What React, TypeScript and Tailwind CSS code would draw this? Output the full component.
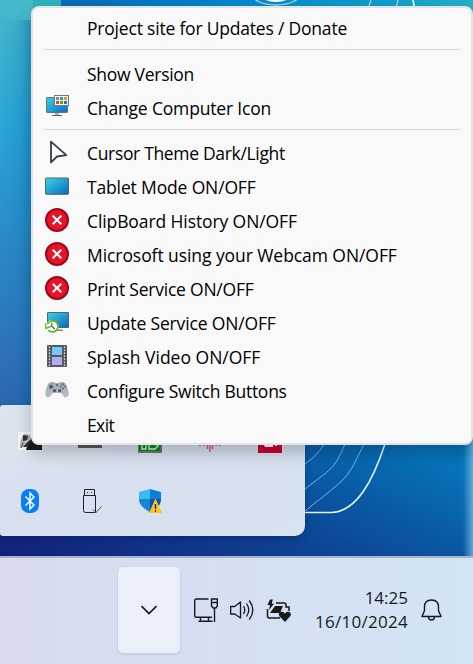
import React from "react";

function ComputerIcon() {
  return (
    <svg width="24" height="24" viewBox="0 0 24 24">
      <defs>
        <linearGradient id="screenA" x1="0" y1="0" x2="1" y2="1">
          <stop offset="0" stopColor="#37d3e2" />
          <stop offset="1" stopColor="#0c69bd" />
        </linearGradient>
      </defs>
      <rect x="1.5" y="2.5" width="21" height="15" rx="0.5" fill="url(#screenA)" stroke="#65747c" />
      <path d="M10 18h4v2h-4z" fill="#aab4bb" />
      <path d="M7 20.5h10" stroke="#555f66" />
      <rect x="9.5" y="0.5" width="14" height="10" fill="#fff" stroke="#767676" />
      <path d="M11 2h3v3h-3z" fill="#a070d0" />
      <path d="M15 2h3v3h-3z" fill="#1aa5b5" />
      <path d="M19 2h3v3h-3z" fill="#f59110" />
      <path d="M11 6h3v3h-3z" fill="#dd4d16" />
      <path d="M15 6h3v3h-3z" fill="#47ac17" />
      <path d="M19 6h3v3h-3z" fill="#117bd4" />
    </svg>
  );
}

function CursorIcon() {
  return (
    <svg width="24" height="24" viewBox="0 0 24 24">
      <path d="M6 1.6V22.4L12 16.5L21.3 15.2Z" fill="#fdfdfd" stroke="#344047" strokeWidth="1.8" strokeLinejoin="round" />
    </svg>
  );
}

function TabletIcon() {
  return (
    <svg width="24" height="24" viewBox="0 0 24 24">
      <defs>
        <linearGradient id="screenB" x1="0" y1="0" x2="1" y2="1">
          <stop offset="0" stopColor="#37d8e4" />
          <stop offset="1" stopColor="#0b68bd" />
        </linearGradient>
      </defs>
      <rect x="0.5" y="4" width="23" height="16.3" rx="0.8" fill="url(#screenB)" stroke="#53656f" />
    </svg>
  );
}

function OffIcon() {
  return (
    <svg width="24" height="24" viewBox="0 0 24 24">
      <circle cx="12" cy="12" r="11" fill="#ea1226" stroke="#9d0720" strokeWidth="2" />
      <path d="M7.7 7.7l8.6 8.6M16.3 7.7l-8.6 8.6" stroke="#fff" strokeWidth="2.1" />
    </svg>
  );
}

function UpdateIcon() {
  return (
    <svg width="24" height="24" viewBox="0 0 24 24">
      <rect x="2.5" y="2.5" width="21" height="15" rx="0.5" fill="url(#screenB)" stroke="#53656f" />
      <path d="M12 20.2h6" stroke="#4c565c" />
      <circle cx="7" cy="16.3" r="6" fill="#fff" stroke="#fff" />
      <path d="M2.2 14.3A5.6 5.6 0 1 1 3.3 20.2" fill="none" stroke="#68b92c" strokeWidth="1.8" />
      <path d="M0 13.2L1 18.4L6 16.3" fill="none" stroke="#68b92c" strokeWidth="1.5" />
      <path d="M6.8 12.8V16.3L9.8 19" fill="none" stroke="#455057" strokeWidth="1.1" />
    </svg>
  );
}

function FilmIcon() {
  return (
    <svg width="24" height="24" viewBox="0 0 24 24">
      <defs>
        <linearGradient id="film" gradientUnits="userSpaceOnUse" x1="7" y1="3" x2="17" y2="21">
          <stop offset="0" stopColor="#53d5ff" />
          <stop offset="1" stopColor="#cf9ff4" />
        </linearGradient>
      </defs>
      <rect x="2" y="1" width="20" height="22" rx="1" fill="#56595c" />
      <path d="M7 3h10v8H7zM7 13h10v8H7z" fill="url(#film)" />
      <path d="M4.5 2.5v19.5M19.5 2.5v19.5" stroke="#e2e2e2" strokeWidth="1.2" strokeDasharray="1.5 1.5" />
    </svg>
  );
}

function GamepadIcon() {
  return (
    <svg width="24" height="24" viewBox="0 0 24 24">
      <defs>
        <linearGradient id="pad" x1="0" y1="0" x2="0" y2="1">
          <stop offset="0" stopColor="#9fa7b1" />
          <stop offset="1" stopColor="#b7bfc9" />
        </linearGradient>
      </defs>
      <path
        d="M7 4C9 4 9 5 12 5S15 4 17 4C21 4 22 8 23.5 14C24.5 18 22 20 20.5 19.5C18 19 17.5 15 15.5 15H8.5C6.5 15 6 19 3.5 19.5C2 20 -.5 18 .5 14C2 8 3 4 7 4Z"
        fill="url(#pad)"
      />
      <circle cx="6" cy="8.7" r="2" fill="#4c5663" />
      <circle cx="9.5" cy="12.7" r="1.6" fill="#4c5663" />
      <circle cx="14.7" cy="12.7" r="1.6" fill="#4c5663" />
      <circle cx="12" cy="7" r="1" fill="#4c5663" />
      <circle cx="18" cy="6.3" r="1" fill="#5c6673" />
      <circle cx="18" cy="10.6" r="1" fill="#5c6673" />
      <circle cx="15.9" cy="8.5" r="1" fill="#5c6673" />
      <circle cx="20.1" cy="8.5" r="1" fill="#5c6673" />
    </svg>
  );
}

type Item = { label: string; tracking: string; icon?: React.ReactNode };

const links: Item[] = [{ label: "Project site for Updates / Donate", tracking: "tracking-[-0.2px]" }];
const about: Item[] = [
  { label: "Show Version", tracking: "tracking-[-0.28px]" },
  { label: "Change Computer Icon", tracking: "tracking-[-0.17px]", icon: <ComputerIcon /> },
];
const switches: Item[] = [
  { label: "Cursor Theme Dark/Light", tracking: "tracking-[-0.33px]", icon: <CursorIcon /> },
  { label: "Tablet Mode ON/OFF", tracking: "tracking-[-0.15px]", icon: <TabletIcon /> },
  { label: "ClipBoard History ON/OFF", tracking: "tracking-[-0.1px]", icon: <OffIcon /> },
  { label: "Microsoft using your Webcam ON/OFF", tracking: "tracking-[-0.07px]", icon: <OffIcon /> },
  { label: "Print Service ON/OFF", tracking: "tracking-[-0.22px]", icon: <OffIcon /> },
  { label: "Update Service ON/OFF", tracking: "tracking-[-0.15px]", icon: <UpdateIcon /> },
  { label: "Splash Video ON/OFF", tracking: "tracking-normal", icon: <FilmIcon /> },
  { label: "Configure Switch Buttons", tracking: "tracking-[-0.26px]", icon: <GamepadIcon /> },
  { label: "Exit", tracking: "tracking-[-0.6px]" },
];

function Rows({ items }: { items: Item[] }) {
  return (
    <>
      {items.map((item) => (
        <li key={item.label} className="flex h-[34px] items-center pl-3">
          <span className="mb-0.5 w-[42px] shrink-0">{item.icon}</span>
          <span className={"whitespace-nowrap " + item.tracking}>{item.label}</span>
        </li>
      ))}
    </>
  );
}

function ContextMenu() {
  return (
    <ul className="absolute top-1.5 left-[31px] h-[439px] w-[442px] rounded-lg border-2 border-[#e3e4e6] bg-[#f9f9f9] pt-[3px] text-[17.5px] leading-6 text-black shadow-[0_8px_16px_rgba(0,0,0,0.22)]">
      <Rows items={links} />
      <li className="mx-[11px] mt-1 mb-[7px] h-px bg-[#d7d7d7]" />
      <Rows items={about} />
      <li className="mx-[11px] mt-1 mb-[6px] h-px bg-[#d7d7d7]" />
      <Rows items={switches} />
    </ul>
  );
}

function Wallpaper() {
  return (
    <svg className="absolute inset-0" width="473" height="556" viewBox="0 0 473 556">
      <defs>
        <linearGradient id="side" gradientUnits="userSpaceOnUse" x1="0" y1="0" x2="0" y2="420">
          <stop offset="0" stopColor="#48b9ca" />
          <stop offset="0.3" stopColor="#2ba5d7" />
          <stop offset="0.6" stopColor="#2c88c4" />
          <stop offset="0.85" stopColor="#3170b6" />
          <stop offset="1" stopColor="#2a62ab" />
        </linearGradient>
        <linearGradient id="sideShade" gradientUnits="userSpaceOnUse" x1="0" y1="0" x2="33" y2="0">
          <stop offset="0" stopColor="#0070b5" stopOpacity="0" />
          <stop offset="0.6" stopColor="#0070b5" stopOpacity="0.15" />
          <stop offset="1" stopColor="#0070b5" stopOpacity="0.4" />
        </linearGradient>
        <linearGradient id="topStrip" x1="0" y1="0" x2="1" y2="0">
          <stop offset="0" stopColor="#086ab3" />
          <stop offset="0.4" stopColor="#0386c9" />
          <stop offset="0.8" stopColor="#109fc9" />
          <stop offset="1" stopColor="#28b0c8" />
        </linearGradient>
        <linearGradient id="lower" x1="0" y1="1" x2="1" y2="0.4">
          <stop offset="0" stopColor="#13207c" />
          <stop offset="0.5" stopColor="#0d4393" />
          <stop offset="0.75" stopColor="#0a59a6" />
          <stop offset="1" stopColor="#0674b8" />
        </linearGradient>
        <linearGradient id="edge" x1="0" y1="0" x2="1" y2="0">
          <stop offset="0" stopColor="#73bbe2" stopOpacity="0" />
          <stop offset="1" stopColor="#73bbe2" stopOpacity="0.8" />
        </linearGradient>
      </defs>
      <path d="M0 0h61v556H0z" fill="url(#side)" />
      <path d="M33 0h28v20H33z" fill="#2eb2b9" />
      <path d="M0 20h33v400H0z" fill="url(#sideShade)" />
      <path d="M61 0h412v60H61z" fill="url(#topStrip)" />
      <path d="M0 420h473v136H0z" fill="url(#lower)" />
      <path d="M463 430h10v126h-10z" fill="url(#edge)" />
      <ellipse cx="276" cy="-6" rx="24" ry="11" fill="none" stroke="#a4dcf2" strokeWidth="1.3" />
      <ellipse cx="276" cy="-7" rx="17" ry="9" fill="#f5ffff" />
      <path d="M371 0l-4 12M398 0l-3 12" stroke="#9edbe7" strokeWidth="1.2" />
      <path d="M413 0l2 12" stroke="#e8ffff" strokeWidth="1.7" />
      <g fill="none" stroke="#75b8ec" strokeWidth="1">
        <path d="M324 444Q319 454 305 464" />
        <path d="M345 444C334 470 332 468 305 489" />
        <path d="M364 444C346 481 350 475 305 511" />
      </g>
      <path d="M385 444C373 480 357 512 331 512.5H305" fill="none" stroke="#d7fbf8" strokeWidth="1.6" />
    </svg>
  );
}

function TrayPanel() {
  return (
    <div className="absolute top-[405px] left-0 grid h-[131px] w-[305px] grid-cols-[repeat(5,60px)] grid-rows-[60px_60px] place-items-center rounded-l-[3px] rounded-r-[10px] bg-linear-to-br from-[#dce4ee] via-[#d7e0ee] to-[#d7e3ef] pt-1.5 shadow-[0_3px_7px_rgba(0,0,30,0.25)]">
      <svg width="24" height="24" viewBox="0 0 24 24">
        <path d="M0 3h24v18H0z" fill="#f3f3f3" />
        <path d="M12 9h12v12H8z" fill="#191b1e" />
        <path d="M2 19C2 14 3 7 7 5L12 6L13 11L8 12L5 18Z" fill="#a8adb3" />
        <path d="M5 6l5 1-1 4-4 1zM9 13l4-2-4 7H5z" fill="#2d3238" />
        <path d="M3 19l2-5" stroke="#555c64" />
      </svg>
      <svg width="24" height="24" viewBox="0 0 24 24">
        <path d="M0 6h24v13H0z" fill="#55585c" />
      </svg>
      <svg width="24" height="24" viewBox="0 0 24 24">
        <path d="M0 0h24v24H0z" fill="#707b76" />
        <path d="M1 1h21.5v21H1z" fill="#078c18" />
        <path d="M4 20v-6h4v6zM11 20v-6h5l4 3-3 3z" fill="none" stroke="#e6f0e5" strokeWidth="1.3" />
      </svg>
      <svg width="24" height="24" viewBox="0 0 24 24" stroke="#d85a87" strokeWidth="1.5">
        <path d="M2 10v7M6 8v9M9.5 6v14M12 4v19M14.5 6v14M18 8v9M22 10v7" />
      </svg>
      <svg width="24" height="24" viewBox="0 0 24 24">
        <path d="M0 0h24v24H0z" fill="#ca0433" />
        <path d="M6 14h5v2h3v-2h1v4H9q-3 0-3-2zM17 13h2v4h-2z" fill="#fff" />
      </svg>
      <svg width="24" height="24" viewBox="0 0 24 24">
        <rect x="3" width="18" height="24" rx="8" fill="#087df8" />
        <path d="M7.5 7.5L16 16L12 20V4l4 4-8.5 8.5" fill="none" stroke="#fff" strokeWidth="1.5" />
      </svg>
      <svg width="24" height="24" viewBox="0 0 24 24" fill="none" stroke="#202124">
        <path d="M6.5 6.5v-6h10v6M5.5 6.5h12v17h-10a2 2 0 0 1-2-2z" />
        <path d="M9 3.5h1M13 3.5h1" />
        <path d="M15 20.5l3 3 5.5-6" stroke="#555" />
      </svg>
      <svg width="24" height="24" viewBox="0 0 24 24">
        <path d="M12 0L23 3v7H12z" fill="#0b80d7" />
        <path d="M12 0L1 3v7h11z" fill="#35bdf0" />
        <path d="M1 10h11v13C6 20 1 16 1 10z" fill="#1685dc" />
        <path d="M12 10h11c0 6-4 10-11 13z" fill="#0754aa" />
        <path d="M17.5 9.5L24 24H11z" fill="#ffc51b" />
        <path d="M17.5 15v5M17.5 21.3v1.4" stroke="#151515" strokeWidth="1.3" />
      </svg>
    </div>
  );
}

function Taskbar() {
  return (
    <footer className="flex h-[108px] border-t-2 border-[#a9b3c8] bg-linear-to-r from-[#d8daee] via-[#d4e0f1] to-[#d2e5f4] text-[#17191c]">
      <button className="mt-[9px] ml-[118px] flex h-[86px] w-[62px] items-center justify-center rounded-[5px] bg-[#ebeff9] shadow-[0_1px_1px_1px_rgba(150,170,210,0.24)]">
        <svg width="18" height="12" viewBox="0 0 18 12">
          <path d="M1.5 2.2L9 9.5L16.5 2.2" fill="none" stroke="currentColor" strokeWidth="1.7" />
        </svg>
      </button>
      <div className="mt-10 ml-[14px] flex gap-3">
        <svg width="24" height="24" viewBox="0 0 24 24" fill="none" stroke="currentColor" strokeWidth="1.4">
          <path d="M14.5 1H2.5Q.7 1 .7 2.8V17.5Q.7 19.3 2.5 19.3H18M6.5 19.5v4M14.5 19.5v4M4.5 23.3h14" />
          <path d="M17.5 1h5.8v7l-1.5 2h-2.5l-1.8-2zM17.5 4.5h5.8M20.5 10v14" />
        </svg>
        <svg width="24" height="24" viewBox="0 0 24 24" fill="none" stroke="currentColor" strokeWidth="1.3">
          <path d="M.7 8.5h4L10.5 4v16L4.7 16h-4z" strokeLinejoin="round" />
          <path d="M13.5 8q2.5 4 0 8M16.5 5.5q4.5 6.5 0 13M19.3 2.5q7 9.5 0 19" />
        </svg>
        <svg width="25" height="24" viewBox="0 0 25 24">
          <path d="M10 5h8q2 0 2 2v2h3v4M1.5 11v7q0 2 2 2H14" fill="none" stroke="currentColor" strokeWidth="1.5" />
          <path d="M4 1.5L1.5 7H4L3 12L8 5.7H5.8L6.7 1.5z" fill="currentColor" />
          <path d="M9 8h8l-3 7H4z" fill="currentColor" />
          <path d="M19 24L13.7 18.5C10.5 14 16.5 12 19 15.5C21.5 12 27 14.5 24 18.5z" fill="currentColor" />
        </svg>
      </div>
      <time className="mt-7 ml-auto flex w-24 flex-col items-end text-[17px] leading-6">
        <span>14:25</span>
        <span className="tracking-[0.27px]">16/10/2024</span>
      </time>
      <svg className="mt-10 mr-[31px] ml-[13px]" width="21" height="24" viewBox="0 0 21 24" fill="none" stroke="currentColor" strokeWidth="1.4">
        <path d="M3.5 12.5V9Q3.5 2 10.5 2T17.5 9v3.5L20 18.5H1z" strokeLinejoin="round" />
        <path d="M7.5 19q0 3 3 3t3-3" />
      </svg>
    </footer>
  );
}

export default function App() {
  return (
    <div className="flex h-[664px] w-[473px] flex-col overflow-hidden font-['Open_Sans','Noto_Sans',sans-serif]">
      <main className="relative h-[556px] shrink-0">
        <Wallpaper />
        <TrayPanel />
        <ContextMenu />
      </main>
      <Taskbar />
    </div>
  );
}
